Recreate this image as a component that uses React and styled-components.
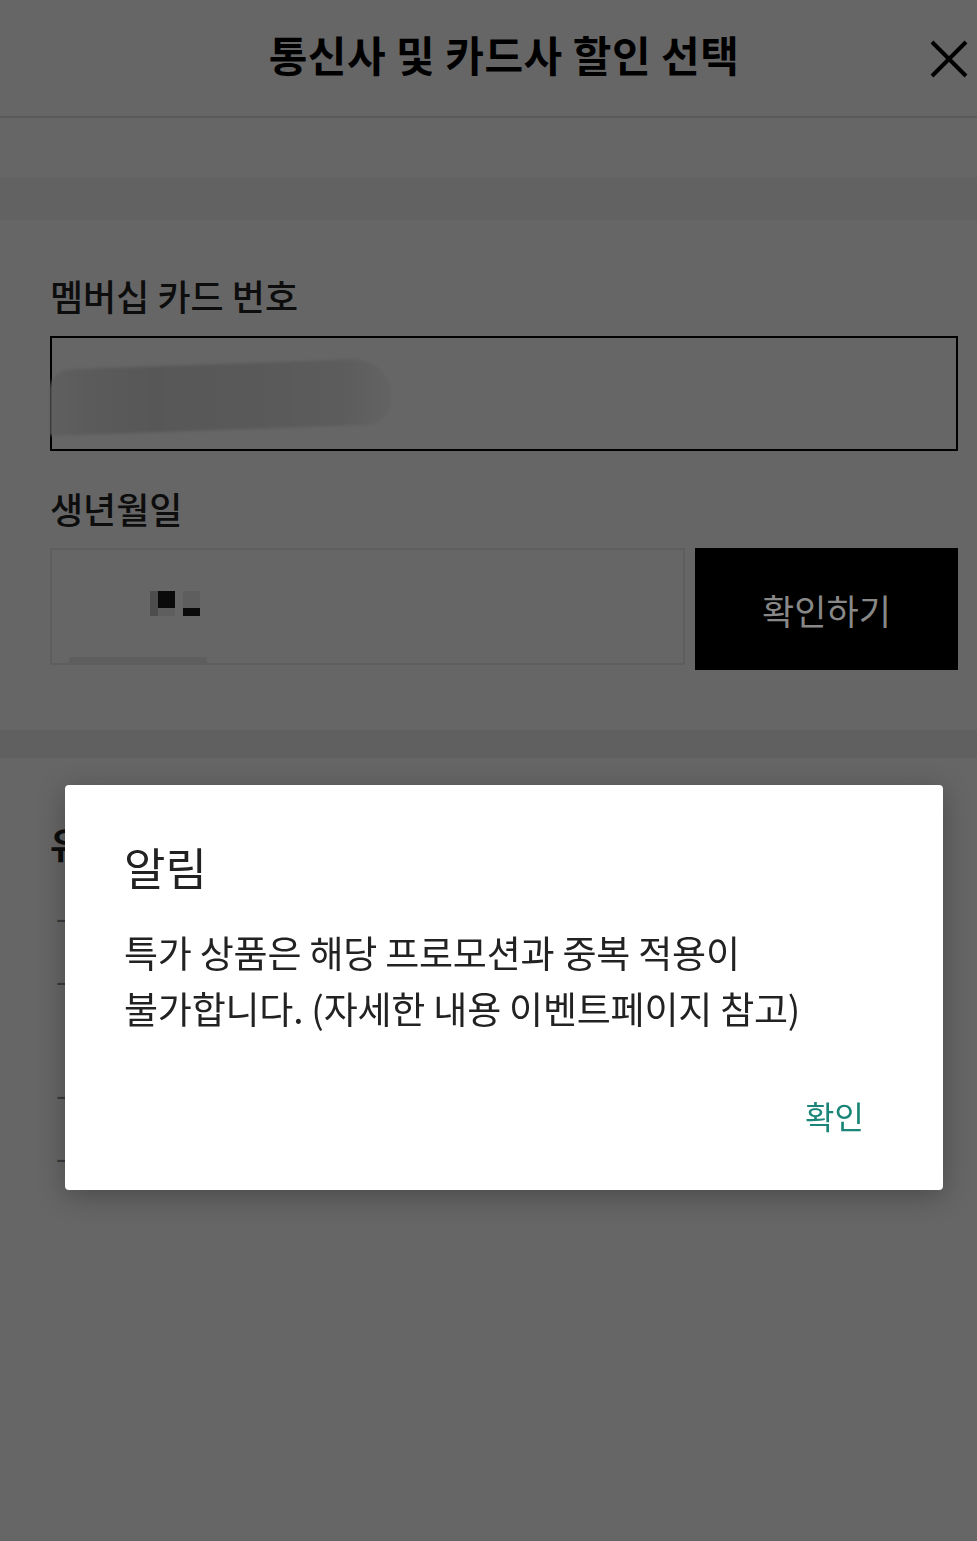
import styled, { createGlobalStyle } from 'styled-components';

const GlobalStyle = createGlobalStyle`
  html, body {
    margin: 0;
    padding: 0;
    background: #666666;
    overflow: hidden;
  }
  body {
    font-family: "Noto Sans CJK KR", "Noto Sans", sans-serif;
  }
`

const Page = styled.div`
  width: 1008px;
  min-height: 1541px;
  background: #666666;
  display: flex;
  flex-direction: column;
`

const Header = styled.header`
  height: 118px;
  box-sizing: border-box;
  padding-bottom: 8px;
  border-bottom: 2px solid #5a5a5a;
  display: flex;
  align-items: center;
  justify-content: center;
  position: relative;
`

const Title = styled.h1`
  margin: 0;
  font-size: 42px;
  font-weight: 700;
  letter-spacing: 0.5px;
  color: #000;
  line-height: 1;
`

const CloseButton = styled.button`
  position: absolute;
  right: 40px;
  top: 40px;
  width: 38px;
  height: 38px;
  padding: 0;
  border: 0;
  background: none;
  display: flex;
`

const Spacer = styled.div`
  height: ${props => props.h}px;
  background: ${props => props.color || 'transparent'};
`

const Section = styled.section`
  padding: ${props => props.pt}px 50px ${props => props.pb}px;
  display: flex;
  flex-direction: column;
`

const Label = styled.div`
  font-size: 36px;
  line-height: 44px;
  font-weight: ${props => props.bold ? 700 : 500};
  color: #0d0d0d;
  margin-bottom: ${props => props.mb}px;
`

const CardInput = styled.div`
  height: 111px;
  border: 2px solid #000;
  position: relative;
  margin-bottom: 35px;
`

const Smudge = styled.div`
  position: absolute;
  left: -2px;
  top: 26px;
  width: 342px;
  height: 66px;
  border-radius: 30px 60px 40px 4px;
  background: linear-gradient(90deg, #5f5f5f 0%, #5a5a5a 14%, #575757 30%, #595959 60%, #5c5c5c 85%, #636363 100%);
  filter: blur(1.5px);
  transform: skewY(-2deg);
`

const Row = styled.div`
  display: flex;
  align-items: flex-start;
  gap: 10px;
`

const BirthInput = styled.div`
  flex: 1;
  height: 113px;
  border: 2px solid #5e5e5e;
  position: relative;
`

const Mosaic = styled.div`
  position: absolute;
  left: 98px;
  top: 41px;
  display: grid;
  grid-template-columns: 8px 17px 8px 17px;
  grid-template-rows: 17px 8px;
`

const Pixel = styled.span`
  background: ${props => props.c};
`

const FadeBar = styled.div`
  position: absolute;
  left: 17px;
  bottom: 0;
  width: 138px;
  height: 6px;
  background: #5e5e5e;
  border-radius: 3px 3px 0 0;
`

const ConfirmButton = styled.button`
  width: 263px;
  height: 122px;
  border: 0;
  background: #000;
  color: #888;
  font-family: "Noto Sans CJK KR", "Noto Sans", sans-serif;
  font-size: 35px;
  font-weight: 400;
`

const NoteList = styled.ul`
  list-style: none;
  margin: 0;
  padding: 0 0 0 6px;
  display: flex;
  flex-direction: column;
  gap: 6px;
`

const NoteItem = styled.li`
  font-size: 30px;
  line-height: 57px;
  color: #3a3a3a;
  min-height: ${props => props.h}px;
`

const Overlay = styled.div`
  position: fixed;
  inset: 0;
  display: flex;
  flex-direction: column;
  align-items: center;
  padding-top: 785px;
  width: 1008px;
`

const Dialog = styled.div`
  width: 878px;
  box-sizing: border-box;
  background: #fff;
  border-radius: 4px;
  box-shadow: 0 6px 28px rgba(0, 0, 0, 0.28);
  padding: 53px 79px 55px 59px;
  display: flex;
  flex-direction: column;
`

const DialogTitle = styled.h2`
  margin: 0 0 28px;
  font-size: 45px;
  line-height: 58px;
  font-weight: 400;
  color: #222;
`

const DialogBody = styled.p`
  margin: 0 0 59px;
  font-size: 37px;
  line-height: 56px;
  color: #222;
  letter-spacing: -0.2px;
`

const DialogAction = styled.button`
  align-self: flex-end;
  border: 0;
  background: none;
  padding: 0;
  font-family: "Noto Sans CJK KR", "Noto Sans", sans-serif;
  font-size: 32px;
  line-height: 40px;
  color: #1a8578;
`

function App(){
  return (
    <>
      <GlobalStyle />
      <Page>
        <Header>
          <Title>통신사 및 카드사 할인 선택</Title>
          <CloseButton aria-label="닫기">
            <svg width="38" height="38" viewBox="0 0 38 38">
              <path d="M2 2 L36 36 M36 2 L2 36" stroke="#000" strokeWidth="4" fill="none" />
            </svg>
          </CloseButton>
        </Header>
        <Spacer h={60} />
        <Spacer h={42} color="#626262" />
        <Section pt={53} pb={60}>
          <Label mb={19}>멤버십 카드 번호</Label>
          <CardInput>
            <Smudge />
          </CardInput>
          <Label mb={18}>생년월일</Label>
          <Row>
            <BirthInput>
              <Mosaic>
                <Pixel c="#4d4d4d" /><Pixel c="#0a0a0a" /><Pixel c="#666" /><Pixel c="#5e5e5e" />
                <Pixel c="#4d4d4d" /><Pixel c="#5e5e5e" /><Pixel c="#666" /><Pixel c="#0a0a0a" />
              </Mosaic>
              <FadeBar />
            </BirthInput>
            <ConfirmButton>확인하기</ConfirmButton>
          </Row>
        </Section>
        <Spacer h={28} color="#606060" />
        <Section pt={63} pb={40}>
          <Label bold mb={23}>유의사항</Label>
          <NoteList>
            <NoteItem h={57}>-</NoteItem>
            <NoteItem h={108}>-</NoteItem>
            <NoteItem h={57}>-</NoteItem>
            <NoteItem h={57}>-</NoteItem>
          </NoteList>
        </Section>
      </Page>
      <Overlay>
        <Dialog role="dialog">
          <DialogTitle>알림</DialogTitle>
          <DialogBody>
            특가 상품은 해당 프로모션과 중복 적용이<br />
            불가합니다. (자세한 내용 이벤트페이지 참고)
          </DialogBody>
          <DialogAction>확인</DialogAction>
        </Dialog>
      </Overlay>
    </>
  )
}

export default App;
